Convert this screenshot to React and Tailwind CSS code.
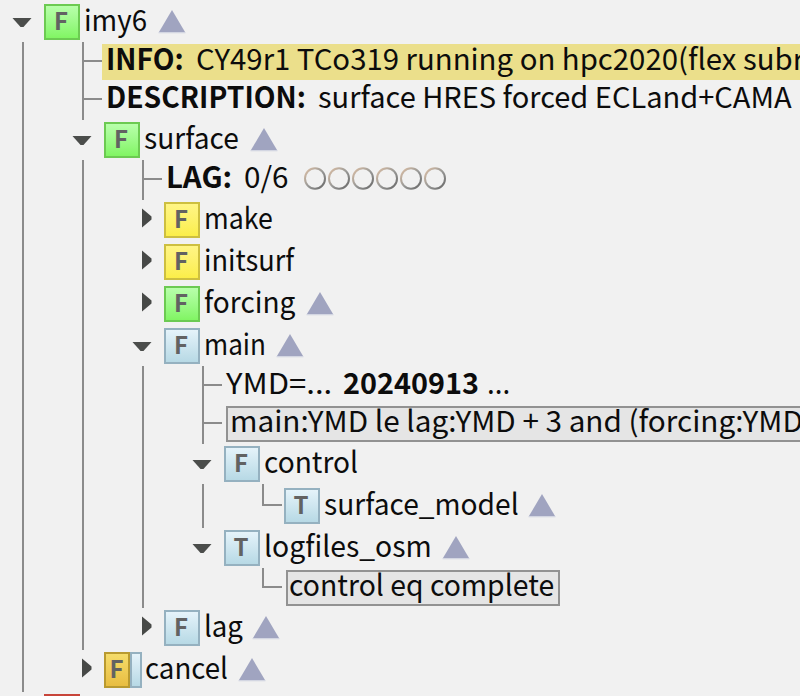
import { useLayoutEffect, useRef } from 'react'

// Text stretched horizontally so that it fills exactly `w` pixels.
function Fit({ w, bold, node, children }) {
  const ref = useRef(null)
  useLayoutEffect(() => {
    const el = ref.current
    el.style.transform = `scaleX(${w / el.offsetWidth})`
  }, [w])
  return (
    <span className="block shrink-0" style={{ width: w }}>
      <span
        ref={ref}
        className={`inline-block origin-left whitespace-pre align-top text-[29px] ${node ? 'leading-[28px]' : 'leading-[27px]'} ${bold ? 'font-bold' : ''}`}
      >
        {children}
      </span>
    </span>
  )
}

const ICONS = {
  green: 'border-[#6cca52] from-[#b8ffab] to-[#81f563]',
  yellow: 'border-[#cdbf40] from-[#fff585] to-[#fbee48]',
  blue: 'border-[#95b1c0] from-[#e5f3fa] to-[#b7d9e5]',
}

function Icon({ color, letter }) {
  return (
    <span
      className={`flex h-9 w-9 shrink-0 items-center justify-center border-2 bg-linear-to-b pr-[2px] ${ICONS[color]}`}
    >
      <Letter>{letter}</Letter>
    </span>
  )
}

function Letter({ children }) {
  return <span className="-mt-[4px] text-[24px] leading-6 font-bold text-[#626262]">{children}</span>
}

function Triangle() {
  return (
    <svg className="mt-1.5 h-6 w-7 shrink-0" viewBox="0 0 28 24">
      <path d="M14 0L27 22H1Z" fill="#a0a4c0" />
      <path d="M.5 22h27v1.3H.5z" fill="#d3d6e2" />
    </svg>
  )
}

function Arrow({ open }) {
  return open ? (
    <svg className="mt-3.5 mr-3 h-2.5 w-5 shrink-0" viewBox="0 0 20 10">
      <path d="M.5 0h19L11.500 9h-3z" fill="#4b4d4b" />
    </svg>
  ) : (
    <svg className="mt-1.5 mr-3 h-5 w-2.5 shrink-0" viewBox="0 0 10 20">
      <path d="M0 0.500V19.500L9.500 11.500V8.500z" fill="#474947" />
    </svg>
  )
}

// Indentation columns: one 60px cell for each ancestor level.
function Guides({ cells }) {
  return cells.map((on, i) => (
    <span key={i} className="w-[60px] shrink-0 self-stretch pl-[22px]">
      {on ? <span className="block h-full w-0.5 bg-[#8b8b8b]" /> : null}
    </span>
  ))
}

function Branch({ last, node }) {
  return (
    <span className="flex w-[44px] shrink-0 self-stretch pl-[22px]">
      <span
        className={`w-0.5 shrink-0 bg-[#8b8b8b] ${last ? (node ? 'h-[22px]' : 'h-5') : 'h-full'}`}
      />
      <span className={`h-0.5 w-[18px] bg-[#8b8b8b] ${node ? 'mt-5' : 'mt-[18px]'}`} />
    </span>
  )
}

function Node({ h = 'h-10', pad = 'pt-0.5', guides = [], open, leaf, icon, name, w, gap, tri, split }) {
  return (
    <div className={`flex shrink-0 ${h}`}>
      <Guides cells={guides} />
      {leaf ? (
        <Branch last node />
      ) : (
        <span className={`flex w-[44px] shrink-0 items-start justify-end ${pad}`}>
          <Arrow open={open} />
        </span>
      )}
      <div className={`flex items-start ${pad}`}>
        {split ? (
          <span className="flex h-9 w-[38px] shrink-0">
            <span className="flex w-[26px] items-center justify-center border-2 border-[#b99a30] bg-linear-to-b from-[#f5dc6a] to-[#e8bd40] pr-px">
              <Letter>F</Letter>
            </span>
            <span className="w-3 border-2 border-[#95b1c0] bg-linear-to-b from-[#e5f3fa] to-[#b7d9e5]" />
          </span>
        ) : (
          <Icon color={icon} letter={leaf || name === 'logfiles_osm' ? 'T' : 'F'} />
        )}
        <span className={split ? 'w-[3px] shrink-0' : 'w-1 shrink-0'} />
        <Fit w={w} node>{name}</Fit>
        {tri ? (
          <>
            <span className="shrink-0" style={{ width: gap }} />
            <Triangle />
          </>
        ) : null}
      </div>
    </div>
  )
}

function Attr({ h, guides, last, children }) {
  return (
    <div className={`flex shrink-0 ${h}`}>
      <Guides cells={guides} />
      <Branch last={last} />
      <div className="flex grow items-start pt-0.5">{children}</div>
    </div>
  )
}

export default function App() {
  return (
    <div className="flex h-[696px] w-[800px] flex-col overflow-hidden bg-[#f1f1f1] font-['Noto_Sans_CJK_SC','Noto_Sans',sans-serif] text-[#0c0c0c]">
      <Node h="h-[42px]" pad="pt-1" open icon="green" name="imy6" w={63} gap={11} tri />
      <Attr h="h-[38px]" guides={[true]}>
        <div className="-ml-0.5 flex h-9 grow bg-[#ebdf8b] pl-1">
          <Fit w={78} bold>INFO:</Fit>
          <span className="w-3 shrink-0" />
          <Fit w={608}>CY49r1 TCo319 running on hpc2020(flex subr</Fit>
        </div>
      </Attr>
      <Attr h="h-10" guides={[true]}>
        <span className="w-0.5 shrink-0" />
        <Fit w={200} bold>DESCRIPTION:</Fit>
        <span className="w-3 shrink-0" />
        <Fit w={474}>surface HRES forced ECLand+CAMA</Fit>
      </Attr>
      <Node guides={[true]} open icon="green" name="surface" w={95} gap={11} tri />
      <Attr h="h-10" guides={[true, true]}>
        <span className="w-0.5 shrink-0" />
        <Fit w={66} bold>LAG:</Fit>
        <span className="w-3 shrink-0" />
        <Fit w={45}>0/6</Fit>
        <span className="mt-[5px] ml-[15px] flex gap-0.5">
          {[0, 1, 2, 3, 4, 5].map((i) => (
            <svg key={i} className="h-[23px] w-[22px]" viewBox="0 0 22 23">
              <defs>
                <linearGradient id={`ring${i}`} x1="0" y1="0" x2="1" y2="1">
                  <stop offset="0.1" stopColor="#d0b8a2" />
                  <stop offset="0.5" stopColor="#9a9a98" />
                  <stop offset="1" stopColor="#666" />
                </linearGradient>
              </defs>
              <ellipse cx="11" cy="11.5" rx="10" ry="10.3" fill="none" stroke={`url(#ring${i})`} strokeWidth="2" />
            </svg>
          ))}
        </span>
      </Attr>
      <Node h="h-[42px]" guides={[true, true]} icon="yellow" name="make" w={69} />
      <Node h="h-[42px]" guides={[true, true]} icon="yellow" name="initsurf" w={90} />
      <Node h="h-[42px]" guides={[true, true]} icon="green" name="forcing" w={91} gap={11} tri />
      <Node guides={[true, true]} open icon="blue" name="main" w={62} gap={10} tri />
      <Attr h="h-[38px]" guides={[true, true, true]}>
        <span className="w-[2px] shrink-0" />
        <Fit w={106}>YMD=...</Fit>
        <span className="w-[11px] shrink-0" />
        <Fit w={136} bold>20240913</Fit>
        <span className="w-[8px] shrink-0" />
        <Fit w={23}>...</Fit>
      </Attr>
      <Attr h="h-10" guides={[true, true, true]}>
        <div className="-mr-1 ml-[2px] flex h-9 grow border-2 border-[#929292] bg-[#e5e5e5] pl-0.5">
          <div className="-mt-0.5">
            <Fit w={573}>main:YMD le lag:YMD + 3 and (forcing:YMD</Fit>
          </div>
        </div>
      </Attr>
      <Node guides={[true, true, true]} open icon="blue" name="control" w={94} />
      <Node h="h-11" pad="pt-1" guides={[true, true, true, true]} leaf icon="blue" name="surface_model" w={195} gap={9} tri />
      <Node guides={[true, true, true]} open icon="blue" name="logfiles_osm" w={168} gap={10} tri />
      <Attr h="h-10" guides={[true, true, true, false]} last>
        <div className="ml-[2px] flex h-9 w-[274px] border-2 border-[#929292] bg-[#e5e5e5] pl-px">
          <div className="-mt-0.5">
            <Fit w={265}>control eq complete</Fit>
          </div>
        </div>
      </Attr>
      <Node h="h-[42px]" guides={[true, true]} icon="blue" name="lag" w={39} gap={9} tri />
      <Node h="h-[42px]" guides={[true]} split name="cancel" w={83} gap={10} tri />
      <div className="mt-0.5 ml-[44px] h-9 w-9 shrink-0 bg-[#c8453a]" />
    </div>
  )
}
